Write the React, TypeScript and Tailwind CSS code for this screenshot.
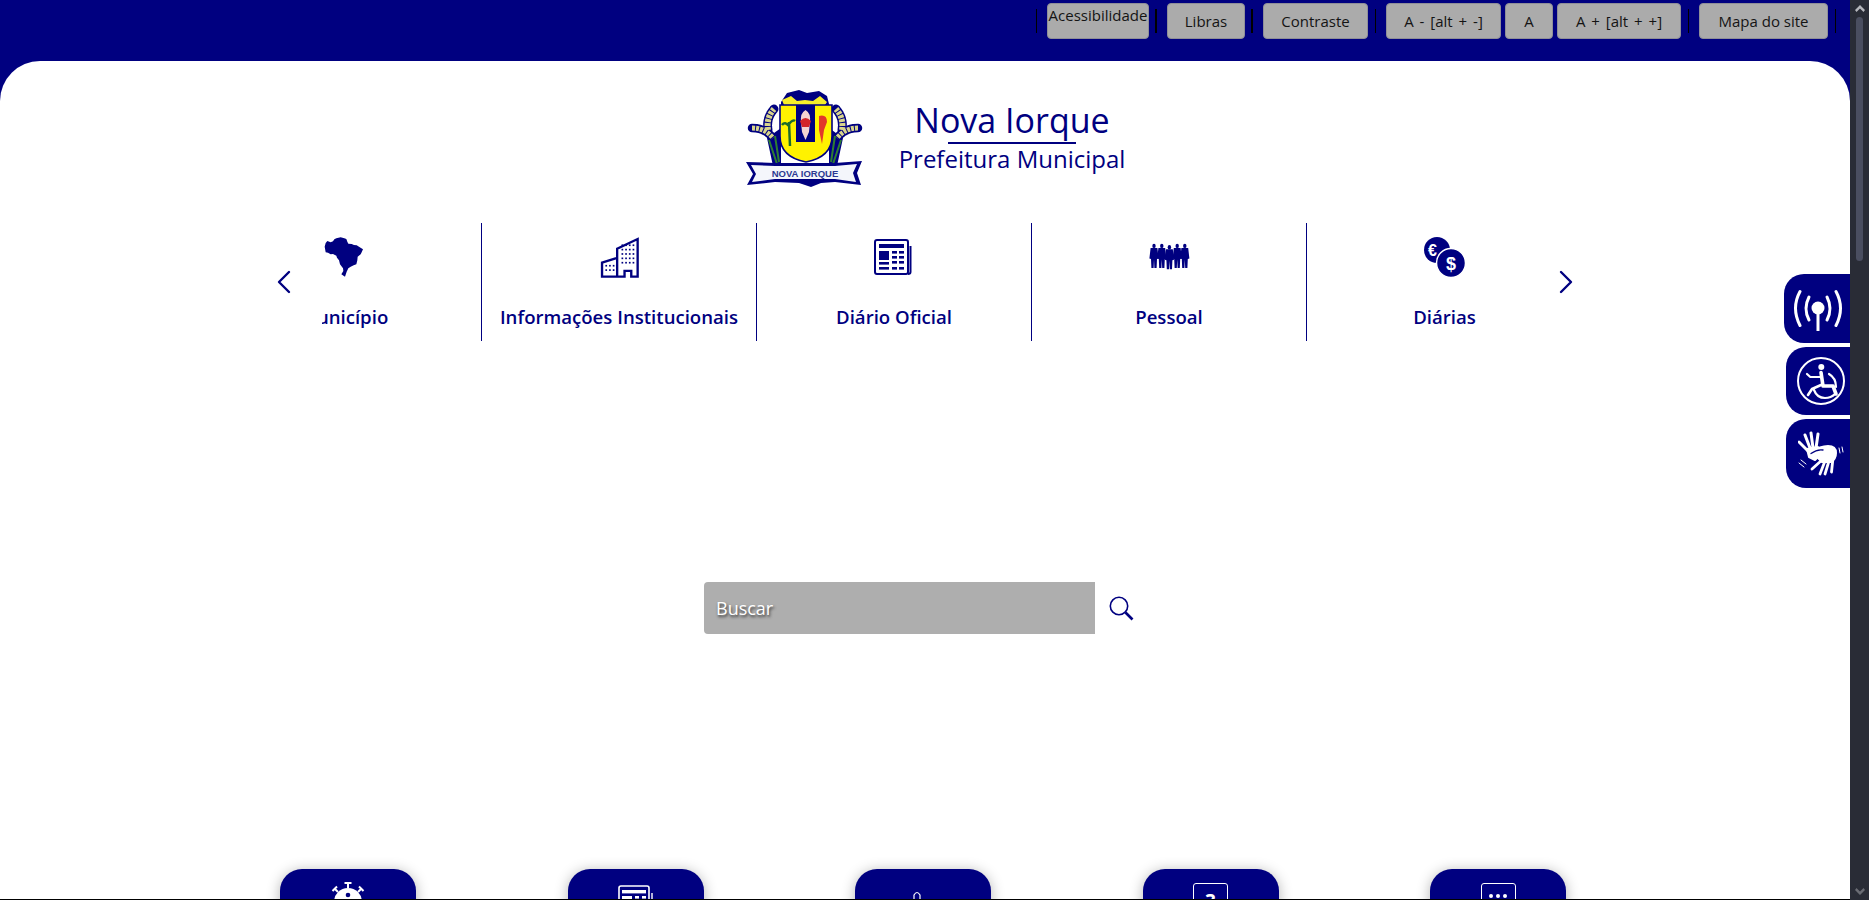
import React from 'react';

const NAVY = '#000080';

const topButtons = [
  { label: 'Acessibilidade', w: 'w-[102px]', top: true, gap: 'ml-[10px]', sep: 'w-[2px] ml-[6px]' },
  { label: 'Libras', w: 'w-[78px]', gap: 'ml-[10px]', sep: 'w-[2px] ml-[6px]' },
  { label: 'Contraste', w: 'w-[105px]', gap: 'ml-[10px]', sep: 'w-[1px] ml-[7px]' },
  { label: 'A - [alt + -]', w: 'w-[115px]', gap: 'ml-[10px]', wide: true },
  { label: 'A', w: 'w-[48px]', gap: 'ml-[4px]' },
  { label: 'A + [alt + +]', w: 'w-[124px]', gap: 'ml-[4px]', sep: 'w-[1px] ml-[7px]', wide: true },
  { label: 'Mapa do site', w: 'w-[129px]', gap: 'ml-[10px]', sep: 'w-[1px] ml-[7px]' },
];

function Crest() {
  return (
    <svg width="120" height="97" viewBox="10 12 120 97">
      {/* navy outline of the wheat and stalks */}
      <path d="M33 52 Q31 40 39 31 M107 52 Q109 40 101 31" fill="none" stroke={NAVY} strokeWidth="9" strokeLinecap="round" strokeDasharray="4 1.5" />
      <path d="M17 50 Q30 50 38 60 M123 50 Q110 50 102 60" fill="none" stroke={NAVY} strokeWidth="8.5" strokeLinecap="round" strokeDasharray="4 1.5" />
      <path d="M46 50 L32 60 L38 88 L46 88 Z M94 50 L108 60 L102 88 L94 88 Z" fill={NAVY} />
      {/* crown */}
      <path d="M46 24 L52 15 L64 12 L72 15 L84 13 L92 18 L95 30 L46 30 Z" fill={NAVY} />
      <path d="M47 22 L56 18 L62 23 L70 22 L78 23 L85 18 L92 24 L90 27 L49 27 Z" fill="#f6ee2a" />
      {/* wheat grains */}
      <path d="M33 52 Q31 40 39 31 M107 52 Q109 40 101 31" fill="none" stroke="#d8d58c" strokeWidth="6" strokeDasharray="3 1" />
      <path d="M17 50 Q30 50 38 60 M123 50 Q110 50 102 60" fill="none" stroke="#d8d58c" strokeWidth="5" strokeDasharray="3 1" />
      <path d="M34 62 L42 86 M40 58 L44 84 M106 62 L98 86 M100 58 L96 84" stroke="#2d7d32" strokeWidth="2" />
      {/* shield */}
      <path d="M45 27 L97 27 L97 58 Q97 79 71 84 Q45 79 45 58 Z" fill="#fff200" stroke={NAVY} strokeWidth="1.6" />
      <rect x="61" y="27" width="19" height="37" fill={NAVY} />
      <path d="M70.5 32 Q76 35 75 44 L74 54 L70.5 62 L67 54 L66 44 Q65 35 70.5 32 Z" fill="#f4d2d2" />
      <path d="M65 43 Q70.5 37 76 43 L74 49 L67 49 Z" fill="#d2232a" />
      <path d="M84 38 Q92 36 92 44 L89 52 L87 66 L84 52 Z" fill="#e2382a" />
      <path d="M55 68 L54 44 M54 48 Q50 43 47 47 M54 46 Q58 41 60 43" stroke="#1d6b2a" strokeWidth="2.5" fill="none" />
      {/* ribbon */}
      <path d="M11 84 L40 85 L100 85 L127 83 L122 95 L126 107 L100 104 L86 105 L76 109 L64 105 L40 104 L12 107 L18 96 Z" fill={NAVY} />
      <path d="M16 87 L40 88 L100 88 L122 86 L118 95 L121 104 L100 101 L40 101 L17 104 L21 96 Z" fill="#f4f6fb" />
      <text x="70" y="98.5" textAnchor="middle" fontSize="9.5" fontWeight="700" fill="#2c3a92" fontFamily="Liberation Sans, sans-serif">NOVA IORQUE</text>
    </svg>
  );
}

function BrazilIcon() {
  return (
    <svg width="42" height="42" viewBox="192 60 126 126" fill={NAVY}>
      <path d="M197 95 L200 84 L205 78 L215 82 L222 79 L226 73 L232 70 L245 67 L256 70 L262 72 L265 80 L268 86 L278 87 L285 90 L293 91 L300 95 L312 103 L308 112 L305 118 L296 125 L295 136 L292 148 L284 151 L275 155 L268 160 L263 170 L258 185 L247 178 L253 168 L252 160 L243 148 L240 136 L234 128 L232 122 L222 117 L215 118 L207 113 L200 112 Z" />
    </svg>
  );
}

function BuildingIcon() {
  const dots: React.ReactNode[] = [];
  for (let r = 0; r < 5; r++) {
    for (let c = 0; c < 4; c++) {
      dots.push(<rect key={`a${r}${c}`} x={1079 + c * 11} y={87 + r * 13} width="5" height="5" />);
    }
  }
  for (let r = 0; r < 2; r++) {
    for (let c = 0; c < 3; c++) {
      dots.push(<rect key={`b${r}${c}`} x={1031 + c * 11} y={148 + r * 13} width="5" height="5" />);
    }
  }
  return (
    <svg width="41" height="43" viewBox="1012 62 122 128" fill={NAVY}>
      <path d="M1066 183 L1066 100 L1127 71 L1127 183 L1108 183 L1108 166 L1088 166 L1088 183 Z M1066 183 L1021 183 L1021 141 L1066 127" fill="none" stroke={NAVY} strokeWidth="7" />
      {dots}
    </svg>
  );
}

function NewsIcon() {
  return (
    <svg width="40" height="36" viewBox="0 0 40 36" fill={NAVY}>
      <rect x="1" y="1" width="33" height="34" rx="2" fill="none" stroke={NAVY} strokeWidth="2" />
      <path d="M36.5 7 L36.5 33 Q36.5 35 34 35" fill="none" stroke={NAVY} strokeWidth="2" />
      <rect x="5" y="5" width="25" height="4" />
      <rect x="5" y="12" width="10" height="9" />
      {[12, 17, 22].map((y) => (
        <React.Fragment key={y}>
          <rect x="18" y={y} width="5" height="2.6" />
          <rect x="25" y={y} width="5" height="2.6" />
        </React.Fragment>
      ))}
      <rect x="5" y="23" width="10" height="2.6" />
      <rect x="5" y="28" width="10" height="2.6" />
      <rect x="18" y="28" width="5" height="2.6" />
      <rect x="25" y="28" width="5" height="2.6" />
    </svg>
  );
}

function Person({ x, y = 0 }: { x: number; y?: number }) {
  return (
    <g transform={`translate(${x} ${y})`} fill={NAVY}>
      <ellipse cx="5" cy="2.4" rx="1.7" ry="2.2" />
      <path d="M1.6 4.4 L8.4 4.4 L9.6 15 L8 15.5 L7.6 24.5 L5.4 24.5 L5 16 L4.6 24.5 L2.4 24.5 L2 15.5 L0.4 15 Z" />
    </g>
  );
}

function PeopleIcon() {
  return (
    <svg width="41" height="27" viewBox="0 0 41 27">
      <Person x={0} y={0.5} />
      <Person x={7.8} y={0.5} />
      <Person x={15.4} y={1.8} />
      <Person x={23.2} y={0.5} />
      <Person x={30.8} y={0.5} />
    </svg>
  );
}

function CoinsIcon() {
  return (
    <svg width="41" height="40" viewBox="0 0 41 40">
      <circle cx="13" cy="13" r="13" fill={NAVY} />
      <text x="8.5" y="18.5" fontSize="16" fontWeight="700" textAnchor="middle" fill="#fff" fontFamily="Liberation Sans, sans-serif">€</text>
      <circle cx="27" cy="26" r="14.5" fill={NAVY} stroke="#fff" strokeWidth="1.5" />
      <text x="27" y="32.5" fontSize="18" fontWeight="700" textAnchor="middle" fill="#fff" fontFamily="Liberation Sans, sans-serif">$</text>
    </svg>
  );
}

const carouselItems = [
  { label: 'Município', icon: <BrazilIcon />, pad: 'pt-[12px]' },
  { label: 'Informações Institucionais', icon: <BuildingIcon />, pad: 'pt-[13px]' },
  { label: 'Diário Oficial', icon: <NewsIcon />, pad: 'pt-[16px]' },
  { label: 'Pessoal', icon: <PeopleIcon />, pad: 'pt-[20px]' },
  { label: 'Diárias', icon: <CoinsIcon />, pad: 'pt-[14px]' },
];

function Chevron({ dir }: { dir: 'l' | 'r' }) {
  return (
    <svg width="14" height="24" viewBox="0 0 14 24" fill="none" stroke={NAVY} strokeWidth="2.4" strokeLinecap="round" strokeLinejoin="round">
      <path d={dir === 'l' ? 'M12 2 L2 12 L12 22' : 'M2 2 L12 12 L2 22'} />
    </svg>
  );
}

function SearchIcon() {
  return (
    <svg width="25" height="25" viewBox="0 0 25 25" fill="none" stroke={NAVY}>
      <circle cx="10" cy="10" r="8.7" strokeWidth="1.6" />
      <path d="M16.5 16.5 L23.5 23.5" strokeWidth="2.6" />
    </svg>
  );
}

function AntennaIcon() {
  return (
    <svg width="50" height="44" viewBox="0 0 50 44" fill="none" stroke="#fff" strokeLinecap="round">
      <circle cx="25" cy="21" r="6.5" fill="#fff" stroke="none" />
      <path d="M25 24 L25 44" strokeWidth="3" />
      <path d="M16 10 Q10 21.5 16 33 M34 10 Q40 21.5 34 33" strokeWidth="3" />
      <path d="M7 4.5 Q-2 21 7 38.5 M43 4.5 Q52 21 43 38.5" strokeWidth="3" />
    </svg>
  );
}

function WheelchairIcon() {
  return (
    <svg width="50" height="50" viewBox="0 0 50 50" fill="none" stroke="#fff" strokeLinecap="round" strokeLinejoin="round">
      <circle cx="25" cy="25" r="23" strokeWidth="2" strokeLinecap="butt" />
      <circle cx="25.3" cy="11" r="3" fill="#fff" stroke="none" />
      <path d="M25 16.5 L27 30 L37 30 L40 38" strokeWidth="3.6" />
      <path d="M24.5 21 L14.3 21 L11 18" strokeWidth="2.2" />
      <path d="M25 29 L16 33 L12 39" strokeWidth="2.6" />
      <path d="M18 34 Q21 42 29 42 Q35 42 39 38" strokeWidth="2.2" />
      <path d="M33 18 Q40 22 40 31" strokeWidth="2.2" />
    </svg>
  );
}

function HandsIcon() {
  return (
    <svg width="46" height="46" viewBox="0 0 46 46" fill="none" stroke="#fff" strokeLinecap="round" strokeLinejoin="round">
      <path d="M1 11 L10 20 M7 4 L12 17 M13 2 L15 17 M20 3 L18 17" strokeWidth="3" />
      <path d="M9 18 L20 16 L24 22 L17 29 L11 26 Z" fill="#fff" strokeWidth="2" />
      <path d="M14 21 Q22 15 30 15 Q38 15 38 22 Q38 28 33 31 L24 31 Z" fill="#fff" strokeWidth="2" />
      <path d="M24 29 L14 38 M27 30 L22 43 M31 30 L27 43 M35 27 L33.5 41" strokeWidth="2.8" />
      <path d="M13 22.5 Q19 18 25 19" stroke="#000080" strokeWidth="1.3" />
      <path d="M41 17 L42 22 M44 16 L45 21 M3 29 L8 33 M1 32 L6 36" strokeWidth="1" />
    </svg>
  );
}

const sideTabs = [
  { icon: <AntennaIcon />, cls: 'w-[66px] h-[69px] pl-[9px]' },
  { icon: <WheelchairIcon />, cls: 'w-[64px] h-[68px] pl-[10px]' },
  { icon: <HandsIcon />, cls: 'w-[64px] h-[69px] pl-[12px]' },
];

function VirusIcon() {
  return (
    <svg width="36" height="36" viewBox="0 0 36 36" fill="#fff" stroke="#fff">
      <circle cx="18" cy="20" r="14" stroke="none" />
      <path d="M18 6 L18 1.5 M14.5 1 L21.5 1 M8 10 L5 7 M2.5 9 L7 4.5 M28 10 L31 7 M33.5 9 L29 4.5" strokeWidth="2" fill="none" />
      <circle cx="18" cy="13" r="2.3" fill={NAVY} stroke="none" />
    </svg>
  );
}

function CalcIcon() {
  return (
    <svg width="36" height="36" viewBox="0 0 36 36" fill="#fff">
      <rect x="1" y="1" width="30" height="34" rx="2" fill="none" stroke="#fff" strokeWidth="1.6" />
      <rect x="4" y="5" width="24" height="3.4" />
      <rect x="4" y="11" width="10" height="8" />
      <rect x="17" y="11" width="4" height="2.6" />
      <rect x="24" y="11" width="4" height="2.6" />
      <path d="M34 8 L34 35" stroke="#fff" strokeWidth="1.4" />
    </svg>
  );
}

function PinIcon() {
  return (
    <svg width="36" height="36" viewBox="0 0 36 36" fill="none" stroke="#fff" strokeWidth="1.2">
      <path d="M9 14 L9 6 Q12 1 15 6 L15 14" />
    </svg>
  );
}

function QuestionIcon() {
  return (
    <div className="w-[35px] h-[36px] border-[1.5px] border-white rounded-[3px] flex justify-center pt-[7px]">
      <span className="text-white text-[20px] leading-none font-bold">?</span>
    </div>
  );
}

function DotsIcon() {
  return (
    <div className="w-[35px] h-[36px] border-[1.5px] border-white rounded-[3px] flex justify-center gap-[3px] pt-[10px]">
      <span className="w-[4px] h-[4px] rounded-full bg-white" />
      <span className="w-[4px] h-[4px] rounded-full bg-white" />
      <span className="w-[4px] h-[4px] rounded-full bg-white" />
    </div>
  );
}

const tiles = [
  { icon: <VirusIcon />, pt: 'pt-[13px]' },
  { icon: <CalcIcon />, pt: 'pt-[16px]' },
  { icon: <PinIcon />, pt: 'pt-[20px]' },
  { icon: <QuestionIcon />, pt: 'pt-[14px]' },
  { icon: <DotsIcon />, pt: 'pt-[14px]' },
];

export default function App() {
  return (
    <div className="flex h-screen overflow-hidden bg-white font-['Open_Sans','Noto_Sans',sans-serif]">
      <div className="relative w-[1850px] h-full overflow-hidden bg-[#000080] flex flex-col">
        {/* top bar */}
        <div className="h-[61px] shrink-0 flex justify-end pr-[14px] pt-[3px]">
          <div className="flex items-start">
            <span className="w-[1px] h-[24px] mt-[6px] bg-black" />
            {topButtons.map((b) => (
              <React.Fragment key={b.label}>
                <button
                  className={`${b.w} ${b.gap} h-[36px] rounded-[4px] border border-[#8f8f98] bg-[#ababab] text-[15px] text-[#141414] flex justify-center whitespace-pre ${b.wide ? '[word-spacing:2px]' : ''} ${b.top ? 'items-start' : 'items-center'}`}
                >
                  {b.label}
                </button>
                {b.sep && <span className={`${b.sep} h-[24px] mt-[6px] bg-black`} />}
              </React.Fragment>
            ))}
          </div>
        </div>

        {/* white panel */}
        <div className="flex-1 bg-white rounded-t-[40px] flex flex-col overflow-hidden">
          <header className="mt-[29px] h-[97px] shrink-0 flex items-center justify-center pl-[21px] gap-[33px]">
            <Crest />
            <div className="w-[228px] flex flex-col items-center text-[#000080]">
              <div className="text-[34px] leading-[32px] h-[38px] font-medium whitespace-nowrap">Nova Iorque</div>
              <div className="w-[128px] h-[2px] bg-[#000080]" />
              <div className="text-[24px] leading-[30px] font-medium whitespace-nowrap">Prefeitura Municipal</div>
            </div>
          </header>

          {/* carousel */}
          <div className="mt-[36px] h-[118px] shrink-0 flex pl-[277px]">
            <div className="w-[45px] flex items-start pt-[47px]">
              <Chevron dir="l" />
            </div>
            <div className="w-[1224px] overflow-hidden">
              <div className="flex ml-[-115px] w-[1375px]">
                {carouselItems.map((it, i) => (
                  <div
                    key={it.label}
                    className={`w-[275px] h-[118px] shrink-0 flex flex-col items-center ${i < 4 ? 'border-r border-[#000080]' : ''}`}
                  >
                    <div className={`h-[80px] ${it.pad}`}>{it.icon}</div>
                    <div className="text-[18.6px] font-[550] text-[#000080] leading-[28px] whitespace-nowrap">{it.label}</div>
                  </div>
                ))}
              </div>
            </div>
            <div className="ml-[13px] flex items-start pt-[47px]">
              <Chevron dir="r" />
            </div>
          </div>

          {/* search */}
          <div className="mt-[241px] shrink-0 flex items-center pl-[704px]">
            <div className="w-[391px] h-[52px] bg-[#aeaeae] rounded-l-[4px] flex items-center pl-[12px] text-[18px] text-white [text-shadow:1px_2px_3px_#333]">
              Buscar
            </div>
            <div className="ml-[14px]">
              <SearchIcon />
            </div>
          </div>

          {/* tiles, cut off by the fold */}
          <div className="mt-[235px] shrink-0 flex pl-[280px] gap-[151.5px]">
            {tiles.map((t, i) => (
              <div key={i} className={`w-[136px] h-[120px] shrink-0 rounded-[22px] bg-[#000080] shadow-[0_2px_14px_rgba(0,0,0,0.3)] flex justify-center ${t.pt}`}>
                {t.icon}
              </div>
            ))}
          </div>
        </div>

        {/* floating tabs */}
        <div className="absolute right-0 top-[274px] flex flex-col items-end gap-[4px]">
          {sideTabs.map((t, i) => (
            <div key={i} className={`${t.cls} rounded-l-[20px] bg-[#000080] flex items-center`}>
              {t.icon}
            </div>
          ))}
        </div>

        <div className="absolute left-0 right-0 bottom-0 h-[1px] bg-black" />
      </div>

      {/* scrollbar */}
      <div className="relative w-[19px] h-full bg-[#292c36] flex flex-col items-center justify-between">
        <svg className="mt-[5px]" width="10" height="7" viewBox="0 0 10 7" fill="#b4b6bc">
          <path d="M5 0 L10 5 L8.5 7 L5 3.5 L1.5 7 L0 5 Z" />
        </svg>
        <span className="absolute top-[17px] left-[6px] w-[7px] h-[244px] rounded-full bg-[#4a4e60]" />
        <svg className="mb-[5px]" width="10" height="7" viewBox="0 0 10 7" fill="#6a6c74">
          <path d="M5 7 L10 2 L8.5 0 L5 3.5 L1.5 0 L0 2 Z" />
        </svg>
      </div>
    </div>
  );
}
